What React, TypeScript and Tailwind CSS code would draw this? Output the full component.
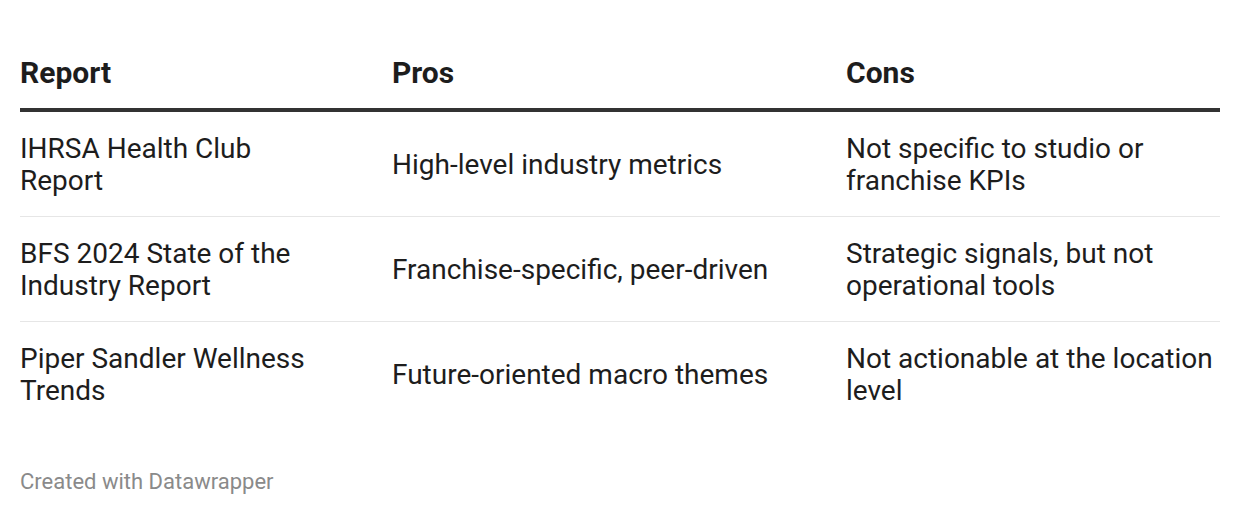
const rows = [
  {
    report: "IHRSA Health Club Report",
    pros: "High-level industry metrics",
    cons: "Not specific to studio or franchise KPIs",
  },
  {
    report: "BFS 2024 State of the Industry Report",
    pros: "Franchise-specific, peer-driven",
    cons: "Strategic signals, but not operational tools",
  },
  {
    report: "Piper Sandler Wellness Trends",
    pros: "Future-oriented macro themes",
    cons: "Not actionable at the location level",
  },
];

export default function App() {
  return (
    <div className="h-[514px] w-[1240px] bg-white px-5 pt-[57px] font-['Roboto',sans-serif] text-[#1d1d1d]">
      <div className="flex border-b-4 border-[#333333] pb-[19px] text-[30px] font-bold leading-8">
        <div className="w-[372px]">Report</div>
        <div className="w-[454px]">Pros</div>
        <div className="w-[374px]">Cons</div>
      </div>

      {rows.map((row, i) => (
        <div
          key={row.report}
          className={`flex items-center pt-[21px] pb-[19px] text-[28px] leading-8 ${
            i < rows.length - 1 ? "border-b border-[#e6e6e6]" : ""
          }`}
        >
          <div className="w-[372px] pr-[60px]">{row.report}</div>
          <div className="w-[454px]">{row.pros}</div>
          <div className="w-[374px]">{row.cons}</div>
        </div>
      ))}

      <div className="mt-[44px] text-[22px] leading-6 text-[#8a8a8a]">Created with Datawrapper</div>
    </div>
  );
}
